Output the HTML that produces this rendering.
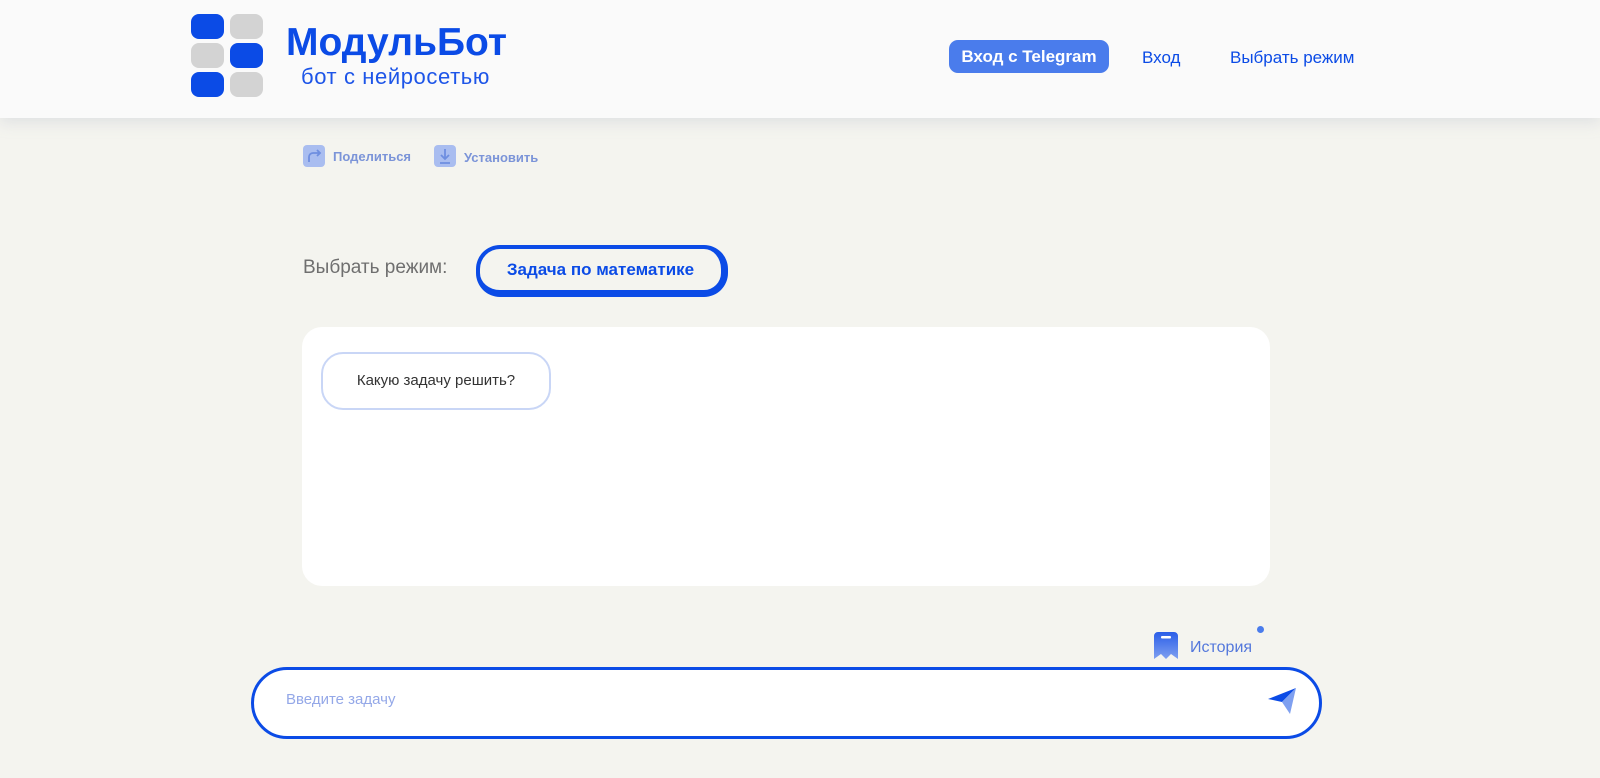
<!DOCTYPE html>
<html><head><meta charset="utf-8"><style>
*{margin:0;padding:0;box-sizing:border-box}
body{width:1600px;height:778px;background:#f4f4ef;font-family:"Liberation Sans","DejaVu Sans",sans-serif;position:relative;overflow:hidden}
.hdr{position:absolute;left:0;top:0;width:1600px;height:118px;background:#fafafa;box-shadow:0 4px 14px rgba(180,185,200,.35)}
.sq{position:absolute;width:33px;height:25px;border-radius:8px}
.b{background:#0b4be6}.g{background:#d3d3d3}
.abs{position:absolute;white-space:nowrap}
</style></head><body>
<div class="hdr">
<div class="sq b" style="left:191px;top:14px"></div><div class="sq g" style="left:230px;top:14px"></div>
<div class="sq g" style="left:191px;top:43px"></div><div class="sq b" style="left:230px;top:43px"></div>
<div class="sq b" style="left:191px;top:72px"></div><div class="sq g" style="left:230px;top:72px"></div>
<div class="abs" style="left:286px;top:21px;font-size:39px;font-weight:bold;color:#0b4be6">МодульБот</div>
<div class="abs" style="left:301px;top:64px;font-size:22px;color:#1d55e8;letter-spacing:0.6px">бот с нейросетью</div>
<div class="abs" style="left:949px;top:40px;width:160px;height:33px;background:#4a7cec;border-radius:9px;color:#fff;font-size:17px;font-weight:bold;text-align:center;line-height:33px">Вход с Telegram</div>
<div class="abs" style="left:1142px;top:48px;font-size:17px;color:#0b4be6">Вход</div>
<div class="abs" style="left:1230px;top:48px;font-size:17px;color:#0b4be6">Выбрать режим</div>
</div>
<svg class="abs" style="left:303px;top:145px" width="22" height="22"><rect width="22" height="22" rx="4" fill="#a9bdf0"/><path d="M6 17V12a4 4 0 0 1 4-4h7M14 5l3 3-3 3" stroke="#6e8ee0" stroke-width="1.8" fill="none"/></svg>
<div class="abs" style="left:333px;top:149px;font-size:13px;font-weight:bold;color:#7b94d8">Поделиться</div>
<svg class="abs" style="left:434px;top:145px" width="22" height="22"><rect width="22" height="22" rx="4" fill="#a9bdf0"/><path d="M11 4v10M7 10l4 4 4-4M6 18h10" stroke="#6e8ee0" stroke-width="1.8" fill="none"/></svg>
<div class="abs" style="left:464px;top:150px;font-size:13px;font-weight:bold;color:#7b94d8">Установить</div>
<div class="abs" style="left:303px;top:257px;font-size:19px;color:#6f6f6f">Выбрать режим:</div>
<div class="abs" style="left:476px;top:245px;width:252px;height:52px;border:4px solid #0b4be6;border-right-width:7px;border-bottom-width:7px;border-radius:24px;background:#f4f4ef;color:#0b4be6;font-size:17px;font-weight:bold;text-align:center;line-height:42px">Задача по математике</div>
<div class="abs" style="left:302px;top:327px;width:968px;height:259px;background:#fff;border-radius:20px"></div>
<div class="abs" style="left:321px;top:352px;width:230px;height:58px;border:2px solid #c9d6f6;border-radius:22px;font-size:15px;color:#333;text-align:center;line-height:54px">Какую задачу решить?</div>
<div class="abs" style="left:1257px;top:626px;width:7px;height:7px;border-radius:50%;background:#4a7cec"></div>
<svg class="abs" style="left:1154px;top:632px" width="24" height="28"><defs><linearGradient id="gr" x1="0" y1="0" x2="0" y2="1"><stop offset="0" stop-color="#2a5ee8"/><stop offset="1" stop-color="#7fa0f0"/></linearGradient></defs><path d="M4 0h16a4 4 0 0 1 4 4v23l-7-5-5 5-5-5-7 5V4a4 4 0 0 1 4-4z" fill="url(#gr)"/><rect x="7" y="4" width="10" height="2.5" rx="1" fill="#fff"/></svg>
<div class="abs" style="left:1190px;top:639px;font-size:16px;color:#5478dc">История</div>
<div class="abs" style="left:251px;top:667px;width:1071px;height:72px;border:3px solid #0b4be6;border-radius:36px;background:#fff"></div>
<div class="abs" style="left:286px;top:691px;font-size:15px;color:#94a8e8">Введите задачу</div>
<svg class="abs" style="left:1268px;top:686px" width="28" height="28"><path d="M0 13L28 2 14 16z" fill="#0b4be6"/><path d="M14 16L28 2 22 28z" fill="#7fa0f0"/></svg>
</body></html>
